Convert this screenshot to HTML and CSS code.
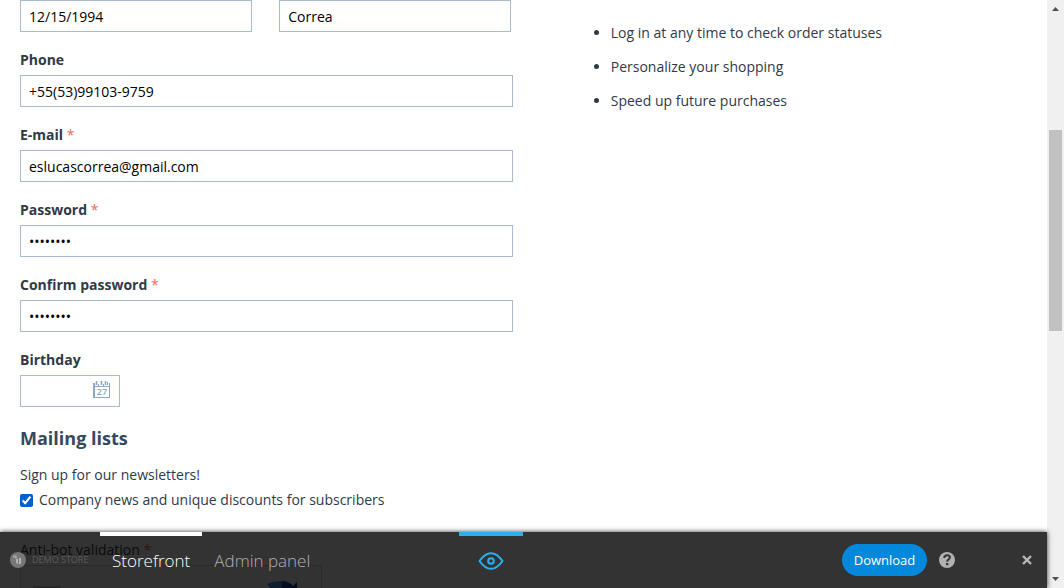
FILE: index.html
```html
<!DOCTYPE html>
<html lang="en">
<head>
<meta charset="utf-8">
<meta name="viewport" content="width=device-width, initial-scale=1">
<title>Create a profile</title>
<link rel="stylesheet" href="styles.css">
</head>
<body>
<div class="viewport">
  <div class="page">
    <main class="columns">
      <form class="profile">
        <div class="name-row">
          <input class="text-input" type="text" aria-label="First name" value="12/15/1994">
          <input class="text-input" type="text" aria-label="Last name" value="Correa">
        </div>
        <div class="field">
          <label class="label" for="phone">Phone</label>
          <input class="text-input" id="phone" type="tel" value="+55(53)99103-9759">
        </div>
        <div class="field">
          <label class="label" for="email">E-mail <span class="required">*</span></label>
          <input class="text-input" id="email" type="email" value="eslucascorrea@gmail.com">
        </div>
        <div class="field">
          <label class="label" for="password">Password <span class="required">*</span></label>
          <input class="text-input" id="password" type="password" value="password">
        </div>
        <div class="field">
          <label class="label" for="confirm">Confirm password <span class="required">*</span></label>
          <input class="text-input" id="confirm" type="password" value="password">
        </div>
        <div class="field">
          <label class="label" for="birthday">Birthday</label>
          <div class="date-box">
            <input class="date-input" id="birthday" type="text">
            <button class="date-button" type="button" aria-label="Open calendar">
              <svg width="17" height="18" viewBox="0 0 17 18" fill="none" stroke="#8fa6bf">
                <path d="M1 2v15" stroke-width="2"/>
                <path d="M16.500 2v15M0 16.500h17"/>
                <path d="M0 5.500h17"/>
                <path d="M3.500 0v4M8.500 0v4M12.500 0v4" stroke-width="1.600"/>
                <path d="M5.500 3v2M10.500 3v2M14.500 1v3"/>
                <text class="cal-day" x="9" y="14" text-anchor="middle">27</text>
              </svg>
            </button>
          </div>
        </div>
        <h2 class="subheader">Mailing lists</h2>
        <p class="note">Sign up for our newsletters!</p>
        <label class="check-row"><input class="check" type="checkbox" checked>Company news and unique discounts for subscribers</label>
        <div class="antibot">
          <p class="antibot-label">Anti-bot validation <span class="required">*</span></p>
          <div class="captcha">
            <span class="captcha-box"></span>
            <svg width="32" height="32" viewBox="0 0 32 32">
              <path d="M1 16A15 15 0 0 1 4 7L1 4q7-3 15-3v8a8 8 0 0 0-6 3l4 4z" fill="#4a90f5"/>
              <path d="M16 1a15 15 0 0 1 11 5l4-4v14H18l5-5a8 8 0 0 0-7-3z" fill="#1c3aa9"/>
              <path d="M1 16h13l-5 5a8 8 0 0 0 14 0l6 3A15 15 0 0 1 5 26l-4 4z" fill="#ababab"/>
            </svg>
          </div>
        </div>
      </form>
      <aside class="benefits">
        <ul class="benefit-list">
          <li>Log in at any time to check order statuses</li>
          <li>Personalize your shopping</li>
          <li>Speed up future purchases</li>
        </ul>
      </aside>
    </main>
  </div>
  <div class="scrollbar" aria-hidden="true">
    <svg width="7" height="4" viewBox="0 0 7 4"><path d="M0 4 3.500 0 7 4z" fill="#505050"/></svg>
    <span class="thumb"></span>
    <svg width="7" height="4" viewBox="0 0 7 4"><path d="M0 0h7L3.500 4z" fill="#505050"/></svg>
  </div>
  <nav class="demo-bar" aria-label="Demo">
    <a class="brand" href="#">
      <svg width="16" height="16" viewBox="0 0 16 16"><circle cx="8" cy="8" r="8" fill="#777"/><path d="M3 4.500h2.500l1 2" fill="none" stroke="#a6a6a6" stroke-width="2"/><path d="M6 7h2v5H7L6 10zM9 6h2v6H9z" fill="#b4b4b4"/></svg>
      <span>DEMO STORE</span>
    </a>
    <a class="tab active" href="#">Storefront</a>
    <a class="tab" href="#">Admin panel</a>
    <button class="preview" type="button" aria-label="Preview">
      <svg width="26" height="18" viewBox="0 0 26 18" fill="none" stroke="#2bb0ee" stroke-width="2"><path d="M1.500 9C5 4 8.500 1.200 13 1.200S21 4 24.500 9C21 14 17.500 16.800 13 16.800S5 14 1.500 9z" stroke-linejoin="round"/><circle cx="13" cy="9" r="2.800"/></svg>
    </button>
    <span class="spacer"></span>
    <button class="download" type="button">Download</button>
    <button class="icon-button" type="button" aria-label="Help">
      <svg width="16" height="16" viewBox="0 0 16 16"><circle cx="8" cy="8" r="8" fill="#b1b1b1"/><path d="M5.200 5.900C5.300 4.100 6.500 3.300 8.100 3.300c1.700 0 2.800.9 2.800 2.300C10.900 7.400 8.200 7.300 8.200 9.700" fill="none" stroke="#333" stroke-width="2"/><path d="M7 11h2.300v2.200H7z" fill="#333"/></svg>
    </button>
    <button class="icon-button close" type="button" aria-label="Close">
      <svg width="10" height="10" viewBox="0 0 10 10"><path d="M1 1l8 8M9 1 1 9" stroke="#b8b8b8" stroke-width="2.400"/></svg>
    </button>
  </nav>
</div>
</body>
</html>
```
FILE: styles.css
```css
* { box-sizing: border-box; }
body {
  margin: 0;
  background: #fff;
  color: #2f3a47;
  font: 14px/20px "Open Sans", sans-serif;
}
button, input { font: inherit; }
button { padding: 0; border: 0; background: none; cursor: pointer; }
.viewport {
  position: relative;
  display: flex;
  height: 100vh;
  overflow: hidden;
}
.page { flex: 1; padding: 0 20px; }
.columns { display: grid; grid-template-columns: 49% 1fr; column-gap: 5%; }
.name-row {
  display: grid;
  grid-template-columns: 1fr 1fr;
  column-gap: 27px;
  padding-right: 2px;
  margin-bottom: 18px;
}
.field { margin-bottom: 18px; }
.label { display: block; margin-bottom: 5px; font-weight: 700; }
.required { color: #ee6a59; font-weight: 400; }
.text-input {
  display: block;
  width: 100%;
  height: 32px;
  padding: 0 8px;
  border: 1px solid #a9bbcd;
  background: #fff;
  color: #000;
}
.date-box {
  display: flex;
  align-items: center;
  width: 100px;
  height: 32px;
  padding-right: 9px;
  border: 1px solid #a9bbcd;
}
.date-input { flex: 1; min-width: 0; height: 28px; border: 0; padding: 0 8px; }
.date-button { display: flex; padding-bottom: 2px; }
.cal-day { font: 600 9px "Open Sans", sans-serif; fill: #8fa6bf; stroke: none; }
.subheader { margin: 0 0 15px; padding-top: 1px; color: #34495e; font-size: 18px; line-height: 24px; font-weight: 700; }
.note { margin: 0 0 5px; }
.check-row { display: flex; align-items: center; gap: 6px; }
.check { width: 13px; height: 13px; margin: 0; accent-color: #005fcc; }
.antibot { margin-top: 30px; }
.antibot-label { margin: 0 0 5px; }
.captcha {
  display: flex;
  align-items: center;
  justify-content: space-between;
  width: 302px;
  height: 76px;
  padding: 0 23px 14px 12px;
  border: 1px solid #d3d3d3;
  background: #f9f9f9;
}
.captcha-box { align-self: flex-end; width: 28px; height: 40px; border: 2px solid #c1c1c1; background: #fff; }
.benefit-list { margin: 0; padding: 23px 0 0 47px; }
.benefit-list li { margin-bottom: 14px; }
.scrollbar {
  display: flex;
  flex-direction: column;
  align-items: center;
  width: 17px;
  padding: 7px 0;
  background: #f0f0f0;
}
.thumb { width: 13px; height: 35%; margin: 119px 0 auto; background: #c1c1c1; }
.demo-bar {
  position: absolute;
  right: 17px;
  bottom: 0;
  left: 0;
  display: flex;
  height: 56px;
  background: rgba(0, 0, 0, 0.8);
  box-shadow: 0 0 5px rgba(0, 0, 0, 0.8);
}
.brand {
  display: flex;
  align-items: center;
  gap: 6px;
  width: 100px;
  padding-left: 10px;
  color: #5b5b5b;
  font-size: 9px;
  text-decoration: none;
  white-space: nowrap;
}
.tab {
  padding: 15px 12px 0;
  border-top: 4px solid transparent;
  color: #b1b1b1;
  font-size: 17px;
  line-height: 20px;
  font-weight: 300;
  text-decoration: none;
}
.tab.active { border-color: #fff; color: #fff; }
.preview {
  display: flex;
  align-items: center;
  justify-content: center;
  width: 64px;
  margin-left: 137px;
  padding-bottom: 2px;
  border-top: 4px solid #2bb0ee;
}
.spacer { flex: 1; }
.download {
  align-self: center;
  width: 85px;
  height: 32px;
  border-radius: 16px;
  background: #0388db;
  color: #fff;
  font-size: 13px;
}
.icon-button { display: flex; align-items: center; margin-left: 12px; }
.close { margin: 0 15px 0 67px; }
```
